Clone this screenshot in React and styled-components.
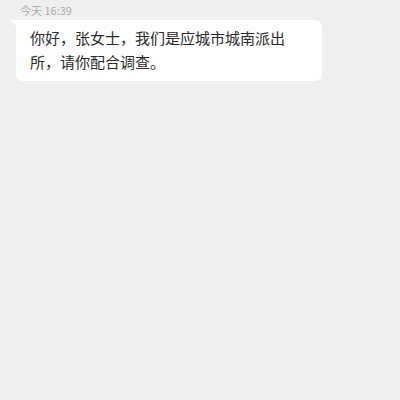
import styled, { createGlobalStyle } from 'styled-components';

const GlobalStyle = createGlobalStyle`
  html, body {
    margin: 0;
    padding: 0;
    background: #efefef;
  }
  body {
    font-family: 'Noto Sans CJK SC', 'Noto Sans', sans-serif;
  }
`;

const Page = styled.div`
  width: 400px;
  height: 400px;
  box-sizing: border-box;
  padding: 3px 0 0 16px;
  display: flex;
  flex-direction: column;
  align-items: flex-start;
`;

const Time = styled.div`
  margin-left: 4px;
  font-size: 11px;
  line-height: 14px;
  color: #ababab;
`;

const Bubble = styled.div`
  position: relative;
  margin-top: 3px;
  width: 306px;
  box-sizing: border-box;
  padding: 6px 10px 7px 14px;
  background: #ffffff;
  border-radius: 0 7px 7px 7px;
  font-size: 15px;
  line-height: 24px;
  color: #2a2a2a;

  &::before {
    content: '';
    position: absolute;
    left: -6px;
    top: 0;
    border-top: 6px solid #ffffff;
    border-left: 6px solid transparent;
  }
`;

const App = () => {
  return (
    <>
      <GlobalStyle />
      <Page>
        <Time>今天 16:39</Time>
        <Bubble>你好，张女士，我们是应城市城南派出所，请你配合调查。</Bubble>
      </Page>
    </>
  );
};

export default App;
